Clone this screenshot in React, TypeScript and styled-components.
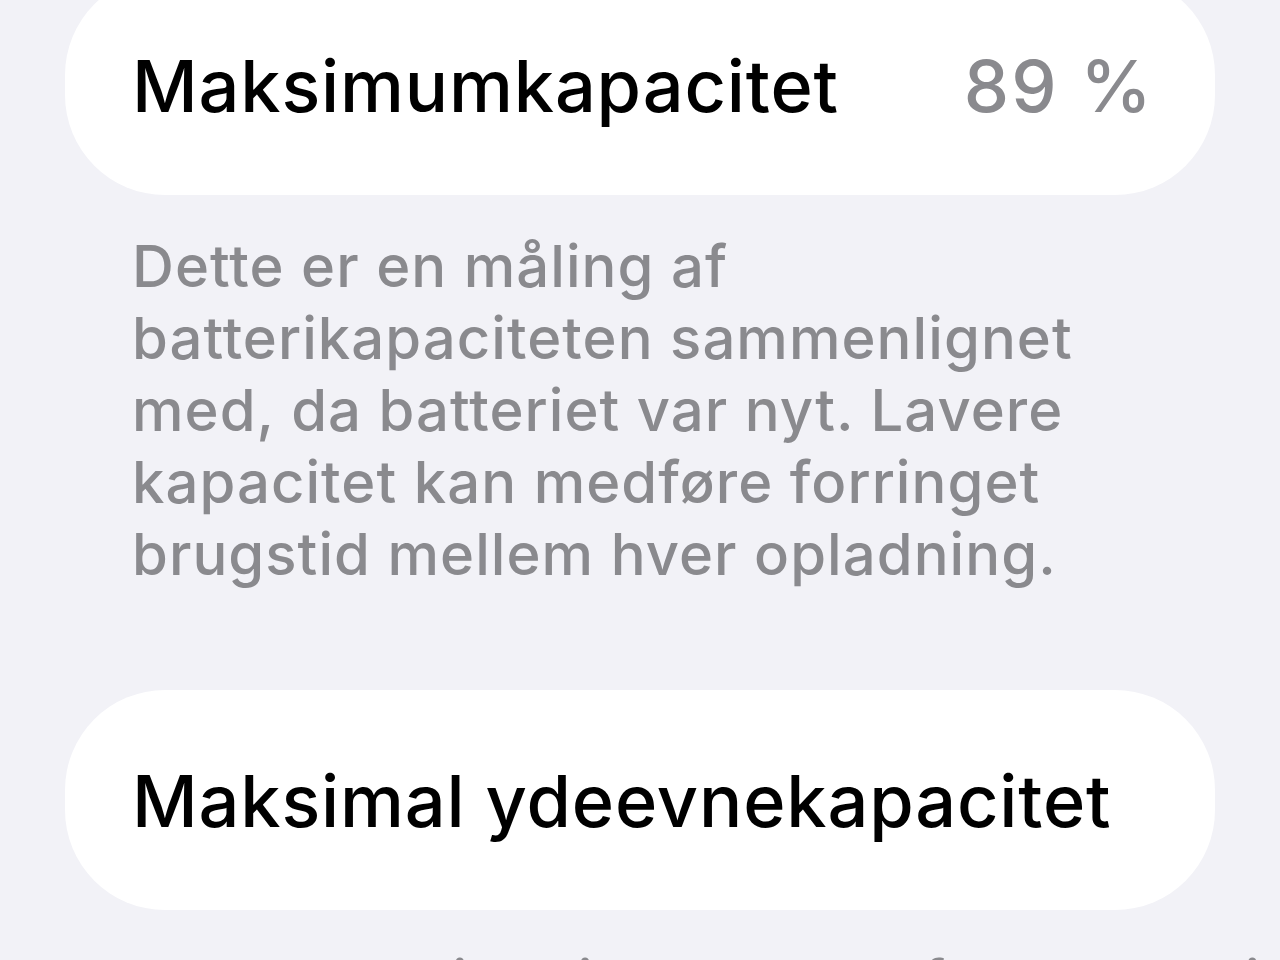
import React from "react";
import styled, { createGlobalStyle } from "styled-components";

const GlobalStyle = createGlobalStyle`
  html, body {
    margin: 0;
    padding: 0;
    background: #f2f2f7;
    overflow: hidden;
  }
  body {
    font-family: Inter, "Noto Sans", "Liberation Sans", sans-serif;
    -webkit-font-smoothing: antialiased;
  }
`;

const Screen = styled.main`
  width: 1280px;
  height: 960px;
  box-sizing: border-box;
  padding: 0 65px;
  background: #f2f2f7;
  display: flex;
  flex-direction: column;
  overflow: hidden;
`;

const Card = styled.section<{ $lift?: number }>`
  height: 220px;
  flex-shrink: 0;
  box-sizing: border-box;
  margin-top: ${(p) => (p.$lift ? `-${p.$lift}px` : "0")};
  padding: 0 67px;
  background: #ffffff;
  border-radius: 100px;
  display: flex;
  align-items: center;
  justify-content: space-between;
`;

const Label = styled.span`
  font-size: 72px;
  font-weight: 500;
  letter-spacing: 0.85px;
  color: #000000;
`;

const Value = styled.span`
  font-size: 72px;
  font-weight: 500;
  letter-spacing: 2.2px;
  margin-right: -6px;
  color: #8a8a8e;
`;

const Footnote = styled.p<{ $top: number; $bottom?: number }>`
  margin: ${(p) => p.$top}px 0 ${(p) => p.$bottom ?? 0}px;
  padding: 0 67px;
  font-size: 58px;
  line-height: 72px;
  font-weight: 500;
  letter-spacing: 1.05px;
  color: #8a8a8e;
  white-space: nowrap;
`;

export default function App() {
  return (
    <>
      <GlobalStyle />
      <Screen>
        <Card $lift={25}>
          <Label>Maksimumkapacitet</Label>
          <Value>89 %</Value>
        </Card>
        <Footnote $top={35} $bottom={100}>
          Dette er en måling af
          <br />
          batterikapaciteten sammenlignet
          <br />
          med, da batteriet var nyt. Lavere
          <br />
          kapacitet kan medføre forringet
          <br />
          brugstid mellem hver opladning.
        </Footnote>
        <Card>
          <Label>Maksimal ydeevnekapacitet</Label>
        </Card>
        <Footnote $top={35}>
          I alle batterier vil ydeevnen falde med tiden.
        </Footnote>
      </Screen>
    </>
  );
}
